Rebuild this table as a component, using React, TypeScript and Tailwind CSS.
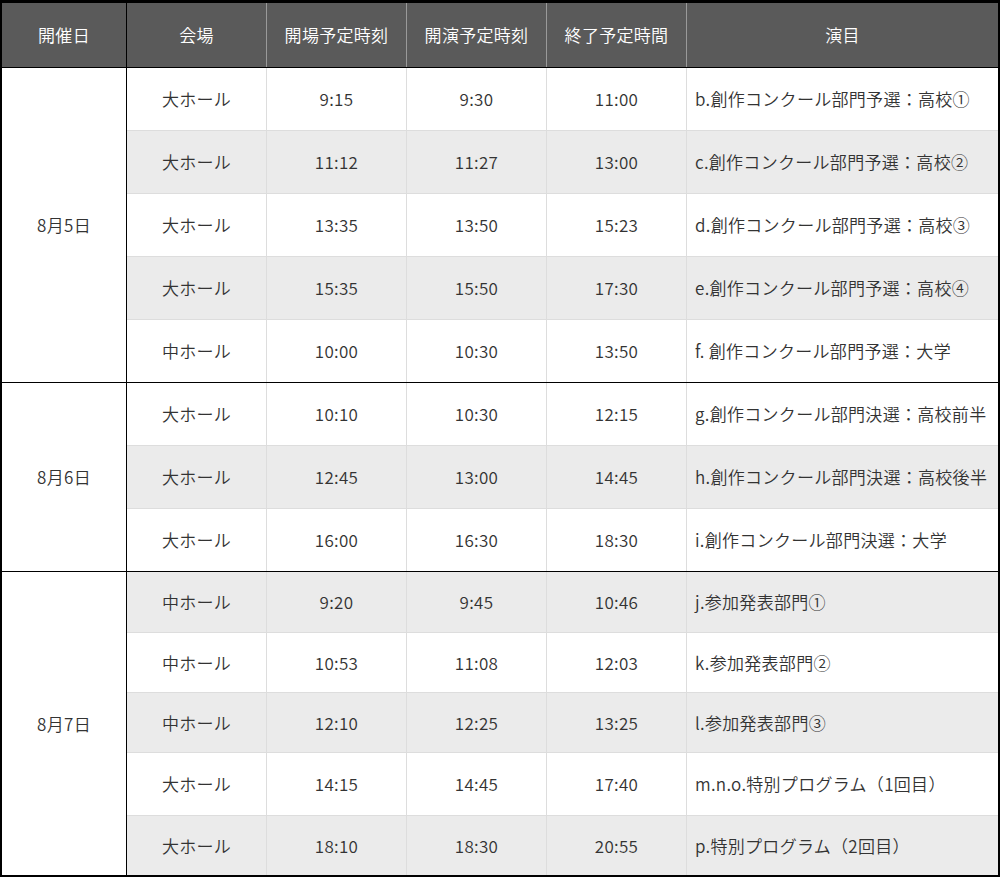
import React from "react"

interface Row {
  hall: string
  open: string
  start: string
  end: string
  title: string
  shaded: boolean
  h: string
}

interface Group {
  date: string
  rows: Row[]
}

const groups: Group[] = [
  {
    date: "8月5日",
    rows: [
      { hall: "大ホール", open: "9:15", start: "9:30", end: "11:00", title: "b.創作コンクール部門予選：高校①", shaded: false, h: "h-[63px]" },
      { hall: "大ホール", open: "11:12", start: "11:27", end: "13:00", title: "c.創作コンクール部門予選：高校②", shaded: true, h: "h-[63px]" },
      { hall: "大ホール", open: "13:35", start: "13:50", end: "15:23", title: "d.創作コンクール部門予選：高校③", shaded: false, h: "h-[63px]" },
      { hall: "大ホール", open: "15:35", start: "15:50", end: "17:30", title: "e.創作コンクール部門予選：高校④", shaded: true, h: "h-[63px]" },
      { hall: "中ホール", open: "10:00", start: "10:30", end: "13:50", title: "f. 創作コンクール部門予選：大学", shaded: false, h: "h-[62px]" },
    ],
  },
  {
    date: "8月6日",
    rows: [
      { hall: "大ホール", open: "10:10", start: "10:30", end: "12:15", title: "g.創作コンクール部門決選：高校前半", shaded: false, h: "h-[63px]" },
      { hall: "大ホール", open: "12:45", start: "13:00", end: "14:45", title: "h.創作コンクール部門決選：高校後半", shaded: true, h: "h-[63px]" },
      { hall: "大ホール", open: "16:00", start: "16:30", end: "18:30", title: "i.創作コンクール部門決選：大学", shaded: false, h: "h-[62px]" },
    ],
  },
  {
    date: "8月7日",
    rows: [
      { hall: "中ホール", open: "9:20", start: "9:45", end: "10:46", title: "j.参加発表部門①", shaded: true, h: "h-[61px]" },
      { hall: "中ホール", open: "10:53", start: "11:08", end: "12:03", title: "k.参加発表部門②", shaded: false, h: "h-[60px]" },
      { hall: "中ホール", open: "12:10", start: "12:25", end: "13:25", title: "l.参加発表部門③", shaded: true, h: "h-[60px]" },
      { hall: "大ホール", open: "14:15", start: "14:45", end: "17:40", title: "m.n.o.特別プログラム（1回目）", shaded: false, h: "h-[63px]" },
      { hall: "大ホール", open: "18:10", start: "18:30", end: "20:55", title: "p.特別プログラム（2回目）", shaded: true, h: "h-[59px]" },
    ],
  },
]

const headers = ["会場", "開場予定時刻", "開演予定時刻", "終了予定時間"]

export default function App() {
  return (
    <div
      className="w-[1000px] bg-white text-[17px] font-[350] tracking-[0.3px] text-[#333333]"
      style={{ fontFamily: '"Noto Sans CJK JP", "Noto Sans", sans-serif' }}
    >
      <div className="border-x-2 border-t-[3px] border-b-2 border-black">
        {/* Header */}
        <div className="flex h-[65px] border-b border-black bg-[#5a5a5a] text-white">
          <div className="flex w-[125px] shrink-0 items-center justify-center border-r border-black">開催日</div>
          {headers.map((h) => (
            <div key={h} className="flex w-[140px] shrink-0 items-center justify-center border-r border-[#9a9a9a]">
              {h}
            </div>
          ))}
          <div className="flex flex-1 items-center justify-center">演目</div>
        </div>

        {/* Body */}
        {groups.map((g, gi) => (
          <div key={g.date} className={`flex ${gi < groups.length - 1 ? "border-b border-black" : ""}`}>
            <div className="flex w-[125px] shrink-0 items-center justify-center border-r border-black">{g.date}</div>
            <div className="flex flex-1 flex-col">
              {g.rows.map((r, ri) => (
                <div
                  key={r.title}
                  className={`flex ${r.h} ${r.shaded ? "bg-[#ebebeb]" : "bg-white"} ${
                    ri < g.rows.length - 1 ? "border-b border-[#dddddd]" : ""
                  }`}
                >
                  <div className="flex w-[140px] shrink-0 items-center justify-center border-r border-[#dddddd]">{r.hall}</div>
                  <div className="flex w-[140px] shrink-0 items-center justify-center border-r border-[#dddddd]">{r.open}</div>
                  <div className="flex w-[140px] shrink-0 items-center justify-center border-r border-[#dddddd]">{r.start}</div>
                  <div className="flex w-[140px] shrink-0 items-center justify-center border-r border-[#dddddd]">{r.end}</div>
                  <div className="flex flex-1 items-center whitespace-nowrap pl-[8px]">{r.title}</div>
                </div>
              ))}
            </div>
          </div>
        ))}
      </div>
    </div>
  )
}
